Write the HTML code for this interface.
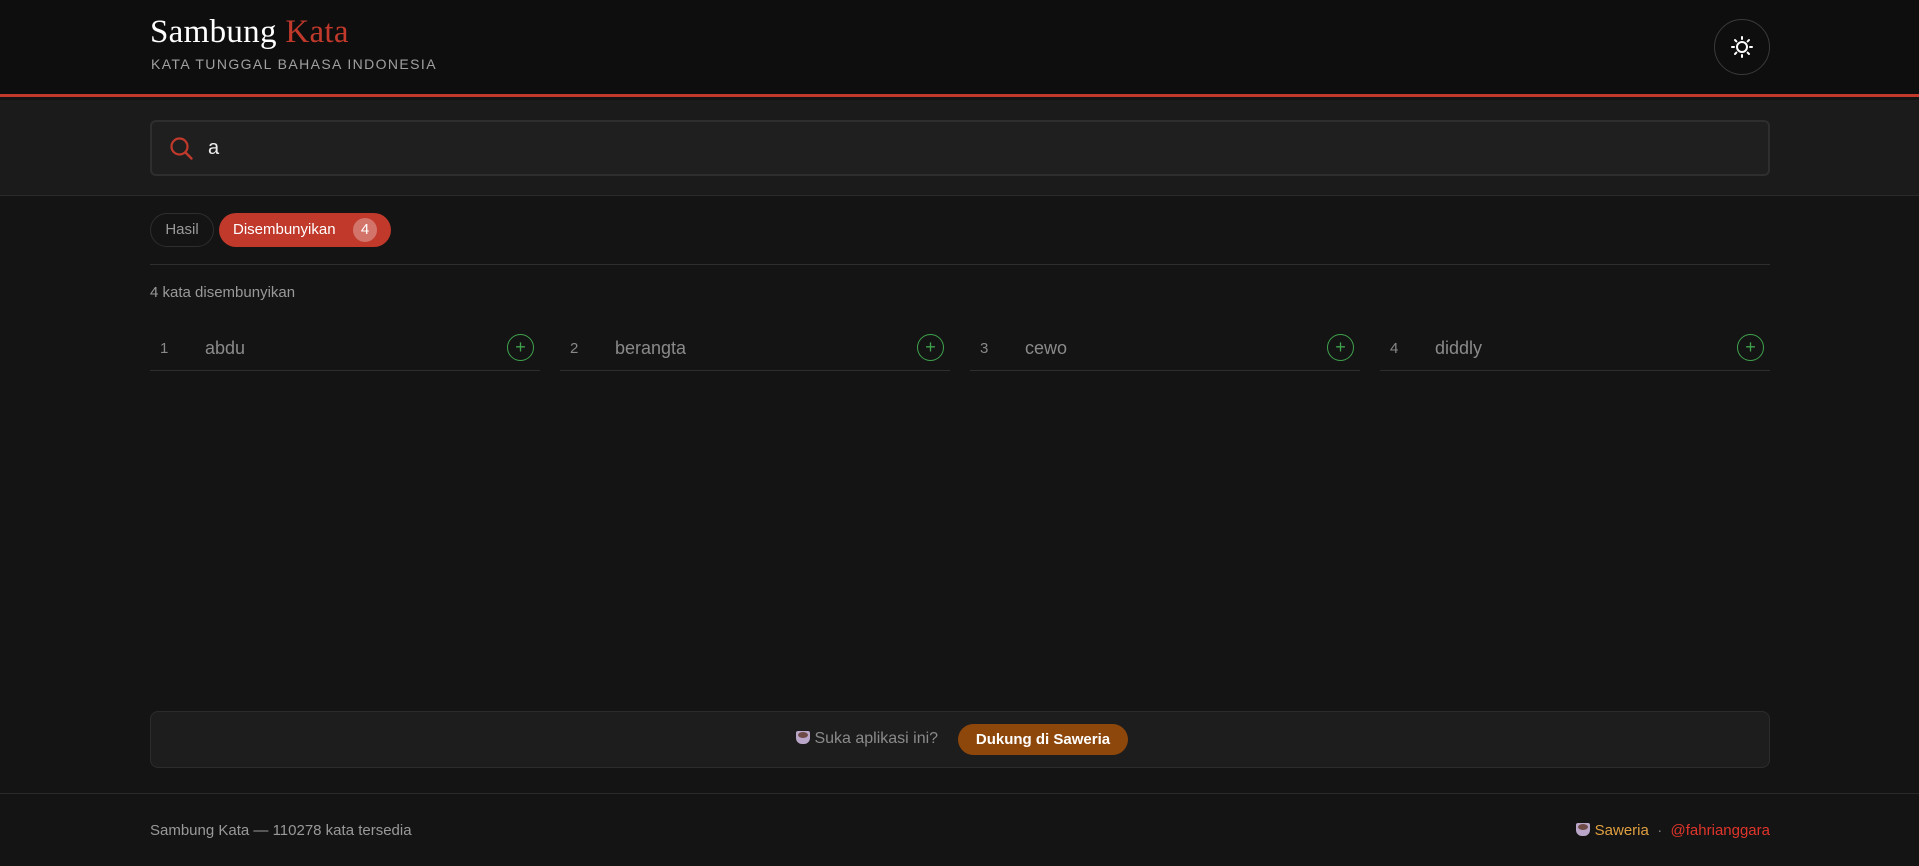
<!DOCTYPE html>
<html><head><meta charset="utf-8"><style>
*{box-sizing:border-box;margin:0;padding:0}
body{width:1919px;height:866px;background:#141414;font-family:"Liberation Sans","DejaVu Sans",sans-serif;position:relative;overflow:hidden;color:#ddd}
.hdr{position:absolute;left:0;top:0;width:1919px;height:97px;background:#0e0e0e;border-bottom:3px solid #c0392b}
.title{position:absolute;left:150px;top:14px;font-family:"Liberation Serif",serif;font-size:33px;color:#fff;letter-spacing:.3px}
.title span{color:#c0392b}
.sub{position:absolute;left:151px;top:56px;font-size:14px;letter-spacing:1.4px;color:#a0a0a0}
.theme{position:absolute;left:1714px;top:19px;width:56px;height:56px;border:1px solid #3a3a3a;border-radius:50%}
.band{position:absolute;left:0;top:100px;width:1919px;height:96px;background:#1b1b1b;border-bottom:1px solid #2a2a2a}
.search{position:absolute;left:150px;top:20px;width:1620px;height:56px;background:#1f1f1f;border:2px solid #2e2e2e;border-radius:6px}
.search .q{position:absolute;left:56px;top:15px;font-size:20px;color:#eee}
.tab{position:absolute;top:213px;height:34px;border-radius:17px;font-size:15px;line-height:34px}
.t1{left:150px;width:64px;border:1px solid #2e2e2e;color:#999;text-align:center;line-height:32px}
.t2{left:219px;width:172px;background:#c0392b;color:#fff;padding-left:14px}
.badge{position:absolute;left:134px;top:5px;width:24px;height:24px;border-radius:50%;background:rgba(255,255,255,.3);text-align:center;line-height:24px;font-size:15px}
.div{position:absolute;left:150px;top:264px;width:1620px;height:1px;background:#2e2e2e}
.cnt{position:absolute;left:150px;top:284px;font-size:15px;color:#999}
.row{position:absolute;top:328px;width:390px;height:43px;border-bottom:1px solid #2e2e2e}
.row .n{position:absolute;left:10px;top:12px;font-size:15px;color:#888}
.row .w{position:absolute;left:55px;top:10px;font-size:18px;color:#8a8a8a}
.row .p{position:absolute;left:357px;top:6px;width:27px;height:27px;border:1px solid #3fa34d;border-radius:50%;color:#3fa34d;text-align:center;line-height:24px;font-size:18px}
.sup{position:absolute;left:150px;top:711px;width:1620px;height:57px;background:#1d1d1d;border:1px solid #2c2c2c;border-radius:8px}
.sup .tx{position:absolute;left:645px;top:18px;font-size:16px;color:#8a8a8a}
.sup .btn{position:absolute;left:807px;top:12px;width:170px;height:31px;border-radius:16px;background:#8e470b;color:#fff;font-weight:bold;font-size:15px;text-align:center;line-height:31px}
.ft{position:absolute;left:0;top:793px;width:1919px;height:1px;background:#2a2a2a}
.fl{position:absolute;left:150px;top:822px;font-size:15px;color:#999}
.fr{position:absolute;right:149px;top:822px;font-size:15px;color:#777}
.cup{display:inline-block;width:14px;height:13px;border-radius:2px 2px 6px 6px;background:#b9a6c9;vertical-align:-1px;position:relative}
.cup:after{content:"";position:absolute;left:2px;top:1px;width:10px;height:6px;border-radius:50%;background:#6e4b47}
</style></head><body>
<div class="hdr">
<div class="title">Sambung <span>Kata</span></div>
<div class="sub">KATA TUNGGAL BAHASA INDONESIA</div>
<div class="theme"><svg width="56" height="56" viewBox="0 0 56 56" style="position:absolute;left:-1px;top:-1px"><circle cx="28" cy="28" r="5" fill="none" stroke="#fff" stroke-width="2"/><g stroke="#fff" stroke-width="2" stroke-linecap="round"><path d="M28 18v2M28 36v2M18 28h2M36 28h2M21 21l1.4 1.4M33.6 33.6L35 35M21 35l1.4-1.4M33.6 22.4L35 21"/></g></svg></div>
</div>
<div class="band"><div class="search">
<svg width="26" height="26" viewBox="0 0 26 26" style="position:absolute;left:17px;top:14px"><circle cx="10.5" cy="10.5" r="8" fill="none" stroke="#c0392b" stroke-width="2.2"/><path d="M16.5 16.5l6 6" stroke="#c0392b" stroke-width="2.4" stroke-linecap="round"/></svg>
<div class="q">a</div></div></div>
<div class="tab t1">Hasil</div>
<div class="tab t2">Disembunyikan<div class="badge">4</div></div>
<div class="div"></div>
<div class="cnt">4 kata disembunyikan</div>
<div class="row" style="left:150px"><span class="n">1</span><span class="w">abdu</span><span class="p">+</span></div>
<div class="row" style="left:560px"><span class="n">2</span><span class="w">berangta</span><span class="p">+</span></div>
<div class="row" style="left:970px"><span class="n">3</span><span class="w">cewo</span><span class="p">+</span></div>
<div class="row" style="left:1380px"><span class="n">4</span><span class="w">diddly</span><span class="p">+</span></div>
<div class="sup"><div class="tx"><span class="cup"></span> Suka aplikasi ini?</div><div class="btn">Dukung di Saweria</div></div>
<div class="ft"></div>
<div class="fl">Sambung Kata — 110278 kata tersedia</div>
<div class="fr"><span class="cup"></span> <span style="color:#e0a040">Saweria</span> &nbsp;·&nbsp; <span style="color:#e0352b">@fahrianggara</span></div>
</body></html>
